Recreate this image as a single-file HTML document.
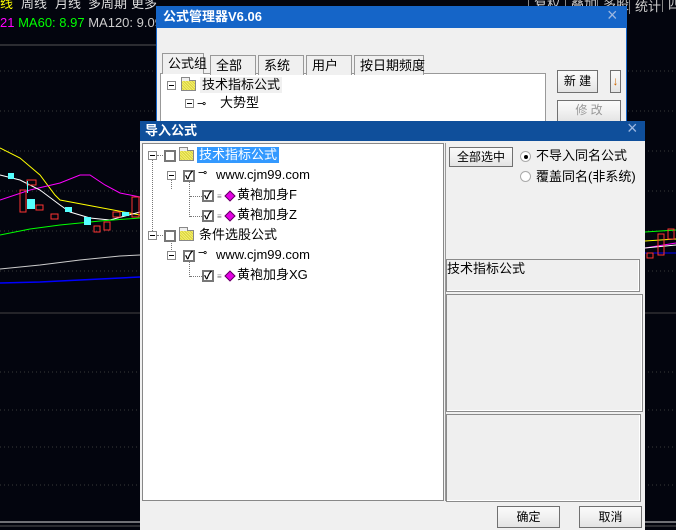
<!DOCTYPE html>
<html><head><meta charset="utf-8"><style>
*{margin:0;padding:0;box-sizing:border-box}
body{width:676px;height:530px;background:#03050e;position:relative;overflow:hidden;font-family:"Liberation Sans","Noto Sans CJK SC",sans-serif;font-size:12px;color:#000}
.a{position:absolute}
.t{white-space:nowrap;line-height:14px}
.btn{position:absolute;background:linear-gradient(#fafafa,#f2f2f2 45%,#e3e3e3);border:1px solid #707070;text-align:center;line-height:18px;font-size:12px}
.panel{position:absolute;background:#efefef;border:1px solid #8a8a8a;box-shadow:inset -1px -1px #fff}
.cb{position:absolute;width:12px;height:12px;border:2px solid #777;background:#fff}
.ck{position:absolute;width:12px;height:12px;border:2px solid #777;background:#fff;font-size:11px;line-height:9px;text-align:center;font-weight:bold}
.pm{position:absolute;width:9px;height:9px;border:1px solid #888;background:#fff}
.pm:after{content:"";position:absolute;left:1px;top:3px;width:5px;height:1px;background:#000}
.fold{position:absolute;width:15px;height:11px;background:repeating-linear-gradient(45deg,#f4f06a 0 1px,#d8d040 1px 2px);border:1px solid #888}
.fold:before{content:"";position:absolute;left:-1px;top:-4px;width:7px;height:3px;border:1px solid #888;border-bottom:0;background:#eee}
.dia{position:absolute;width:8px;height:8px;background:#e400e4;transform:rotate(45deg);border:1px solid #600060}
.dv{position:absolute;border-left:1px dotted #777}
.dh{position:absolute;border-top:1px dotted #777}
.tab{position:absolute;height:20px;border:1px solid #999;border-bottom:0;padding:3px 5px 0;line-height:14px;white-space:nowrap;font-size:13px;background:#f0f0f0}
.tb{position:absolute;top:-6px;height:18px;color:#ccc;font-size:13px;border-left:1px solid #888;padding:0 5px;white-space:nowrap}
</style></head><body>
<svg class="a" style="left:0;top:0" width="676" height="530">
<g stroke="#3a3a3a" stroke-dasharray="1 3">
<line x1="0" y1="71" x2="676" y2="71"/><line x1="0" y1="111" x2="676" y2="111"/><line x1="0" y1="151" x2="676" y2="151"/><line x1="0" y1="191" x2="676" y2="191"/><line x1="0" y1="231" x2="676" y2="231"/><line x1="0" y1="271" x2="676" y2="271"/><line x1="0" y1="372" x2="676" y2="372"/><line x1="0" y1="410" x2="676" y2="410"/><line x1="0" y1="447" x2="676" y2="447"/><line x1="0" y1="485" x2="676" y2="485"/>
</g>
<line x1="0" y1="313" x2="676" y2="313" stroke="#444"/>
<line x1="0" y1="522" x2="676" y2="522" stroke="#ddd"/>
<line x1="0" y1="526" x2="676" y2="526" stroke="#555"/>
<line x1="0" y1="45" x2="160" y2="45" stroke="#555"/>
<polyline fill="none" stroke="#ffff00" points="0,148 20,158 40,175 55,195 60,200 140,215"/>
<polyline fill="none" stroke="#ff00ff" points="0,200 30,190 60,183 80,175 90,175 105,185 120,193 140,197"/>
<polyline fill="none" stroke="#fff" points="0,175 20,180 40,190 60,205 70,212 90,218 110,220 140,212"/>
<polyline fill="none" stroke="#00ff00" points="0,235 30,229 60,225 100,221 140,218"/>
<polyline fill="none" stroke="#ccc" points="0,269 40,265 80,260 120,256 140,255"/>
<polyline fill="none" stroke="#0000ff" stroke-width="1.5" points="0,283 40,282 80,280 140,277"/>
<rect x="8" y="173" width="6" height="6" fill="#5ff"/><rect x="27" y="180" width="9" height="5" fill="none" stroke="#f33"/>
<rect x="20" y="190" width="6" height="22" fill="none" stroke="#f33"/>
<rect x="27" y="181" width="1" height="12" fill="#5ff"/>
<rect x="27" y="199" width="8" height="10" fill="#5ff"/>
<rect x="36" y="205" width="7" height="5" fill="none" stroke="#f33"/>
<rect x="51" y="214" width="7" height="5" fill="none" stroke="#f33"/>
<rect x="65" y="207" width="7" height="5" fill="#5ff"/>
<rect x="84" y="217" width="7" height="8" fill="#5ff"/>
<rect x="94" y="226" width="6" height="6" fill="none" stroke="#f33"/>
<rect x="104" y="222" width="6" height="8" fill="none" stroke="#f33"/>
<rect x="113" y="212" width="7" height="5" fill="none" stroke="#f33"/>
<rect x="122" y="212" width="7" height="4" fill="#5ff"/>
<rect x="132" y="197" width="7" height="20" fill="none" stroke="#f33"/>
<polyline fill="none" stroke="#00ff00" points="645,232 676,230"/>
<polyline fill="none" stroke="#ffff00" points="645,241 676,239"/>
<polyline fill="none" stroke="#ff00ff" points="645,248 676,243"/>
<polyline fill="none" stroke="#fff" points="645,248 676,245"/>
<polyline fill="none" stroke="#0000ff" points="645,253 676,253"/>
<rect x="647" y="253" width="6" height="5" fill="none" stroke="#f33"/>
<rect x="658" y="234" width="6" height="21" fill="none" stroke="#f33"/>
<rect x="668" y="229" width="6" height="10" fill="none" stroke="#f33"/>
</svg>
<div class="a t" style="left:0;top:-3px;color:#ff0;font-size:13px">线</div>
<div class="a t" style="left:21px;top:-3px;color:#ddd;font-size:13px">周线</div>
<div class="a t" style="left:55px;top:-3px;color:#ddd;font-size:13px">月线</div>
<div class="a t" style="left:88px;top:-3px;color:#ddd;font-size:13px">多周期</div>
<div class="a t" style="left:131px;top:-3px;color:#ddd;font-size:13px">更多</div>
<div class="a t" style="left:0;top:16px;font-size:13px"><span style="color:#f0f">21</span> <span style="color:#0f0">MA60: 8.97</span> <span style="color:#ccc">MA120: 9.09</span></div>
<div class="tb" style="left:528px">复权</div>
<div class="tb" style="left:565px">叠加</div>
<div class="tb" style="left:597px">多股</div>
<div class="tb" style="left:629px;top:-4px">统计</div>
<div class="tb" style="left:662px">四</div>

<!-- formula manager -->
<div class="a" style="left:156px;top:6px;width:471px;height:120px;background:#f0f0f0;border:1px solid #1565c8">
<div class="a" style="left:0;top:0;width:470px;height:21px;background:#1565c8"></div>
<div class="a t" style="left:6px;top:3px;color:#fff;font-weight:bold;font-size:13px">公式管理器V6.06</div>
<div class="a t" style="left:450px;top:1px;color:#9cb7e0;font-size:18px">×</div>
<div class="a" style="left:3px;top:66px;width:386px;height:60px;background:#fff;border:1px solid #999"></div>
<div class="tab" style="left:5px;top:46px;width:42px;height:21px;z-index:2">公式组</div>
<div class="tab" style="left:53px;top:48px;width:46px">全部</div>
<div class="tab" style="left:101px;top:48px;width:46px">系统</div>
<div class="tab" style="left:149px;top:48px;width:46px">用户</div>
<div class="tab" style="left:197px;top:48px;width:70px">按日期频度</div>
<div class="pm" style="left:10px;top:74px"></div>
<div class="fold" style="left:24px;top:73px"></div>
<div class="a t" style="left:43px;top:70px;background:#f0f0f0;padding:1px 2px;font-size:13px">技术指标公式</div>
<div class="pm" style="left:28px;top:92px"></div>
<div class="a t" style="left:40px;top:90px;font-size:11px">⊸</div>
<div class="a t" style="left:63px;top:89px;font-size:13px">大势型</div>
<div class="btn" style="left:400px;top:63px;width:41px;height:23px;line-height:21px">新 建</div>
<div class="btn" style="left:453px;top:63px;width:11px;height:23px;color:#c60;line-height:21px">↓</div>
<div class="btn" style="left:400px;top:93px;width:64px;height:23px;color:#999">修 改</div>
</div>

<!-- import dialog -->
<div class="a" style="left:140px;top:121px;width:505px;height:409px;background:#f0f0f0">
<div class="a" style="left:0;top:0;width:505px;height:20px;background:#0f4f9b"></div>
<div class="a t" style="left:5px;top:3px;color:#fff;font-weight:bold;font-size:13px">导入公式</div>
<div class="a t" style="left:487px;top:0;color:#9cb7e0;font-size:18px">×</div>
<div class="a" style="left:2px;top:22px;width:302px;height:358px;background:#fff;border:1px solid #888"></div>
<div class="dv" style="left:12px;top:38px;height:76px"></div>
<div class="dv" style="left:31px;top:58px;height:10px"></div>
<div class="dv" style="left:49px;top:60px;height:36px"></div>
<div class="dh" style="left:50px;top:75px;width:12px"></div>
<div class="dh" style="left:50px;top:95px;width:12px"></div>
<div class="dv" style="left:31px;top:119px;height:10px"></div>
<div class="dv" style="left:49px;top:140px;height:16px"></div>
<div class="dh" style="left:50px;top:155px;width:12px"></div>
<div class="pm" style="left:8px;top:30px"></div><div class="dh" style="left:17px;top:34px;width:8px"></div>
<div class="cb" style="left:24px;top:29px"></div>
<div class="fold" style="left:39px;top:29px"></div>
<div class="a t" style="left:57px;top:26px;background:#3399ff;color:#fff;padding:1px 2px;font-size:13px">技术指标公式</div>
<div class="pm" style="left:27px;top:50px"></div>
<div class="ck" style="left:43px;top:49px">✓</div>
<div class="a t" style="left:58px;top:45px;font-size:11px">⊸</div>
<div class="a t" style="left:76px;top:47px;font-size:13px">www.cjm99.com</div>
<div class="ck" style="left:62px;top:69px">✓</div>
<div class="a t" style="left:77px;top:69px;font-size:8px;color:#777">≡</div>
<div class="dia" style="left:86px;top:71px"></div>
<div class="a t" style="left:97px;top:67px;font-size:13px">黄袍加身F</div>
<div class="ck" style="left:62px;top:89px">✓</div>
<div class="a t" style="left:77px;top:89px;font-size:8px;color:#777">≡</div>
<div class="dia" style="left:86px;top:91px"></div>
<div class="a t" style="left:97px;top:87px;font-size:13px">黄袍加身Z</div>
<div class="pm" style="left:8px;top:110px"></div><div class="dh" style="left:17px;top:114px;width:8px"></div>
<div class="cb" style="left:24px;top:109px"></div>
<div class="fold" style="left:39px;top:109px"></div>
<div class="a t" style="left:59px;top:107px;font-size:13px">条件选股公式</div>
<div class="pm" style="left:27px;top:130px"></div>
<div class="ck" style="left:43px;top:129px">✓</div>
<div class="a t" style="left:58px;top:125px;font-size:11px">⊸</div>
<div class="a t" style="left:76px;top:127px;font-size:13px">www.cjm99.com</div>
<div class="ck" style="left:62px;top:149px">✓</div>
<div class="a t" style="left:77px;top:149px;font-size:8px;color:#777">≡</div>
<div class="dia" style="left:86px;top:151px"></div>
<div class="a t" style="left:97px;top:147px;font-size:13px">黄袍加身XG</div>
<div class="a" style="left:305px;top:22px;width:1px;height:358px;background:#999"></div>
<div class="btn" style="left:309px;top:26px;width:64px;height:20px">全部选中</div>
<div class="a" style="left:380px;top:30px;width:11px;height:11px;border-radius:50%;background:#fff;border:1px solid #aaa"></div>
<div class="a" style="left:384px;top:34px;width:4px;height:4px;border-radius:50%;background:#000"></div>
<div class="a t" style="left:396px;top:28px;font-size:13px">不导入同名公式</div>
<div class="a" style="left:380px;top:50px;width:11px;height:11px;border-radius:50%;background:#fff;border:1px solid #aaa"></div>
<div class="a t" style="left:396px;top:49px;font-size:13px">覆盖同名(非系统)</div>
<div class="panel" style="left:306px;top:138px;width:194px;height:33px"></div>
<div class="a t" style="left:307px;top:141px;font-size:13px">技术指标公式</div>
<div class="panel" style="left:306px;top:173px;width:197px;height:118px"></div>
<div class="panel" style="left:306px;top:293px;width:195px;height:88px"></div>
<div class="btn" style="left:357px;top:385px;width:63px;height:22px;line-height:20px">确定</div>
<div class="btn" style="left:439px;top:385px;width:63px;height:22px;line-height:20px">取消</div>
</div>
</body></html>
